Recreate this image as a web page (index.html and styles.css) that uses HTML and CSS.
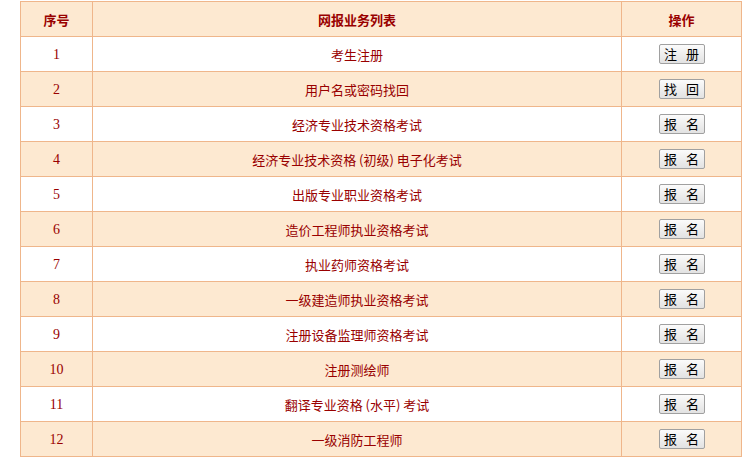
FILE: index.html
```html
<!DOCTYPE html>
<html lang="zh">
<head>
<meta charset="utf-8">
<title>网报业务列表</title>
<link rel="stylesheet" href="styles.css">
</head>
<body>
<table class="list">
  <colgroup><col class="c-no"><col class="c-name"><col class="c-op"></colgroup>
  <thead>
    <tr class="head"><th>序号</th><th>网报业务列表</th><th>操作</th></tr>
  </thead>
  <tbody>
    <tr><td class="num">1</td><td>考生注册</td><td><button class="btn">注&nbsp;册</button></td></tr>
    <tr class="alt"><td class="num">2</td><td>用户名或密码找回</td><td><button class="btn">找&nbsp;回</button></td></tr>
    <tr><td class="num">3</td><td>经济专业技术资格考试</td><td><button class="btn">报&nbsp;名</button></td></tr>
    <tr class="alt"><td class="num">4</td><td>经济专业技术资格 (初级) 电子化考试</td><td><button class="btn">报&nbsp;名</button></td></tr>
    <tr><td class="num">5</td><td>出版专业职业资格考试</td><td><button class="btn">报&nbsp;名</button></td></tr>
    <tr class="alt"><td class="num">6</td><td>造价工程师执业资格考试</td><td><button class="btn">报&nbsp;名</button></td></tr>
    <tr><td class="num">7</td><td>执业药师资格考试</td><td><button class="btn">报&nbsp;名</button></td></tr>
    <tr class="alt"><td class="num">8</td><td>一级建造师执业资格考试</td><td><button class="btn">报&nbsp;名</button></td></tr>
    <tr><td class="num">9</td><td>注册设备监理师资格考试</td><td><button class="btn">报&nbsp;名</button></td></tr>
    <tr class="alt"><td class="num">10</td><td>注册测绘师</td><td><button class="btn">报&nbsp;名</button></td></tr>
    <tr><td class="num">11</td><td>翻译专业资格 (水平) 考试</td><td><button class="btn">报&nbsp;名</button></td></tr>
    <tr class="alt"><td class="num">12</td><td>一级消防工程师</td><td><button class="btn">报&nbsp;名</button></td></tr>
  </tbody>
</table>
</body>
</html>
```

FILE: styles.css
```css
html, body {
  margin: 0;
  padding: 0;
  background: #ffffff;
}
body {
  padding: 1px 0 0 20px;
  font-family: "Noto Sans CJK SC", "Noto Sans", sans-serif;
  font-size: 13px;
  color: #990000;
}
.list {
  border-collapse: collapse;
  width: 722px;
  table-layout: fixed;
}
.c-no { width: 72px; }
.c-name { width: 529px; }
.c-op { width: 120px; }
.list th, .list td {
  border: 1px solid #efb68b;
  height: 34px;
  padding: 0;
  text-align: center;
  vertical-align: middle;
  line-height: 15px;
  font-weight: normal;
}
.list th {
  font-weight: bold;
  font-size: 13px;
  background: #fde9d1;
  color: #990000;
}
.list td.num {
  font-family: "Liberation Serif", "DejaVu Serif", serif;
  font-size: 14px;
}
.list tr.alt td {
  background: #fde9d1;
}
.btn {
  width: 46px;
  height: 20px;
  padding: 0 0 0 3px;
  margin: 0;
  border: 1px solid #a0a0a0;
  border-radius: 2px;
  background: linear-gradient(#fbfbfb, #e2e2e2);
  font-family: "Noto Sans CJK SC", sans-serif;
  font-size: 13px;
  color: #000000;
  letter-spacing: 3px;
  line-height: 16px;
  vertical-align: middle;
}
```
